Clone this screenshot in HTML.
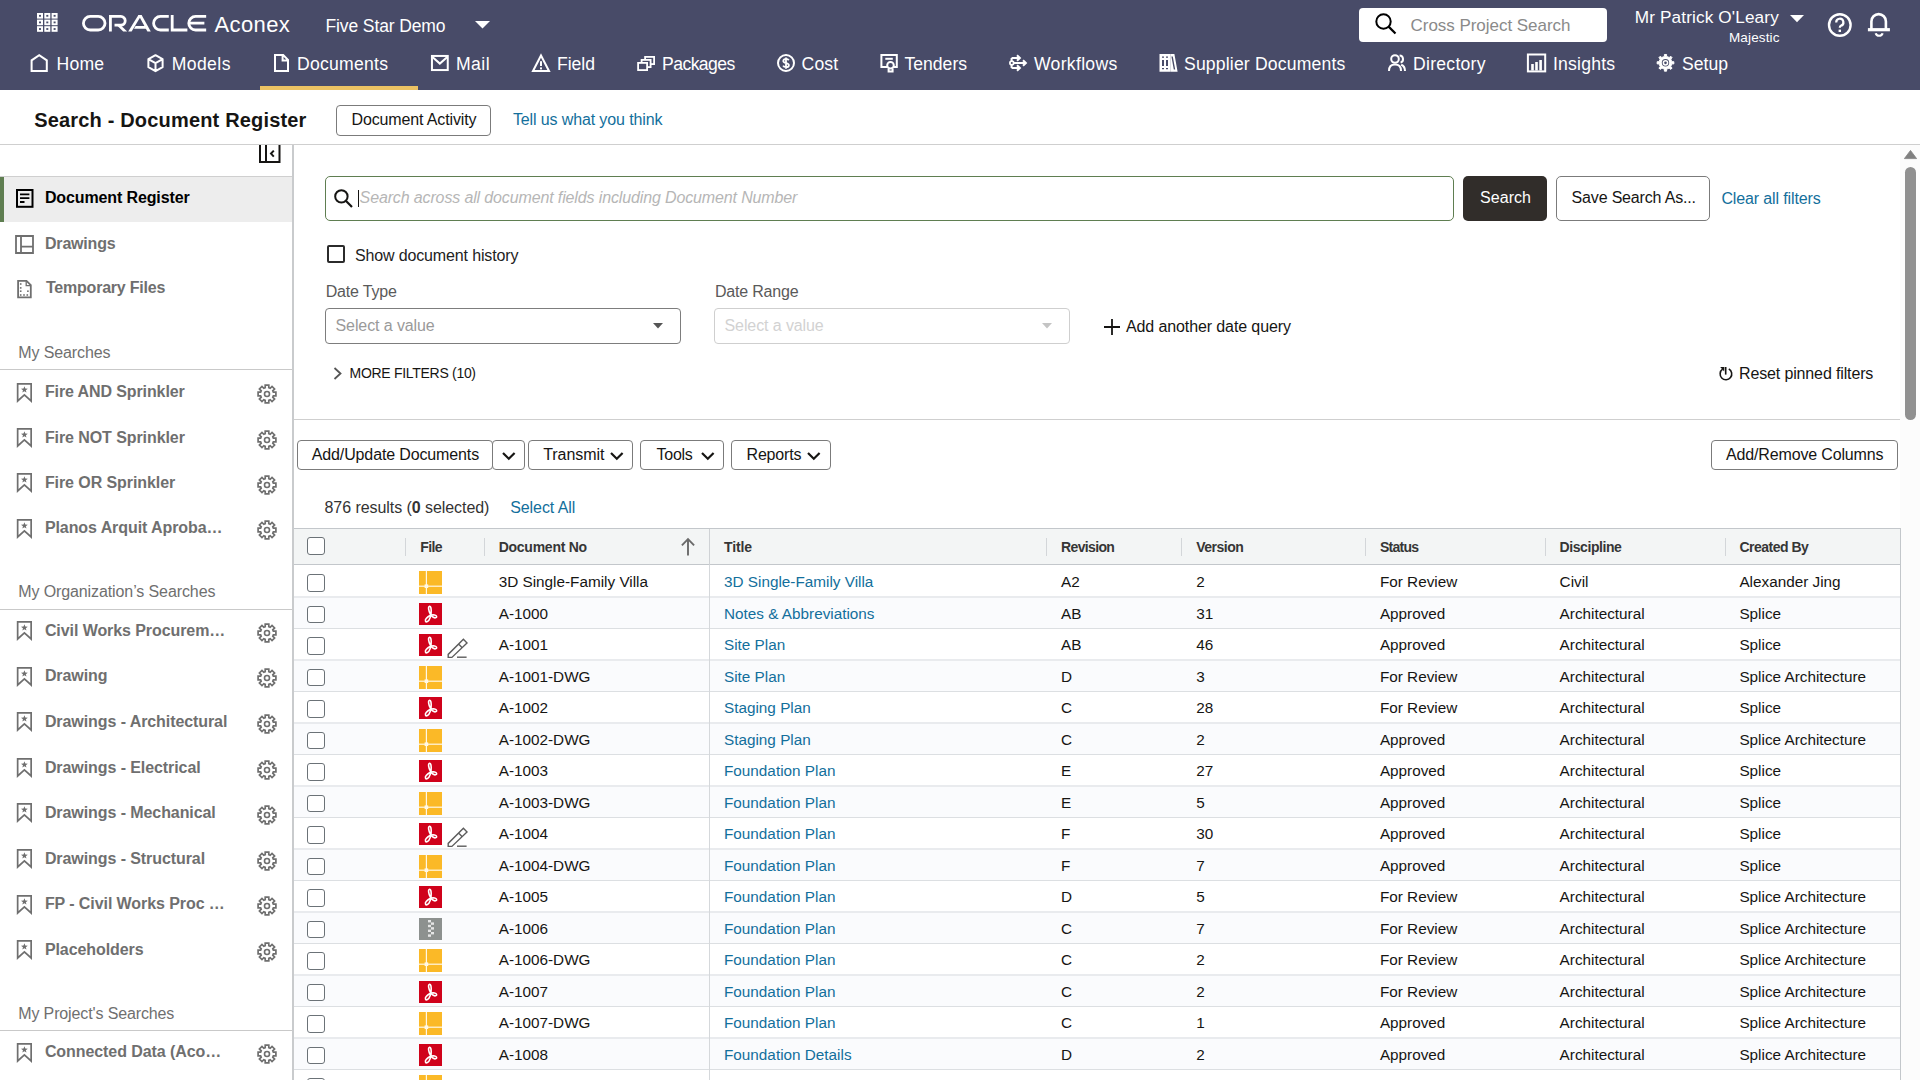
<!DOCTYPE html><html><head><meta charset="utf-8"><style>
html,body{margin:0;padding:0;width:1920px;height:1080px;overflow:hidden;background:#fff;}
body{position:relative;font-family:"Liberation Sans",sans-serif;}
.t{position:absolute;white-space:nowrap;line-height:1;}
svg{overflow:visible}
</style></head><body>
<div style="position:absolute;left:0.00px;top:0.00px;width:1920.00px;height:90.00px;background:#484b68"></div>
<svg style="position:absolute;left:37px;top:13px" width="21" height="19" viewBox="0 0 21 19"><rect x="0" y="0" width="6" height="5.6" fill="#fff"/><rect x="2" y="1.9" width="2" height="1.8" fill="#484b68"/><rect x="0" y="6.6" width="6" height="5.6" fill="#fff"/><rect x="2" y="8.5" width="2" height="1.8" fill="#484b68"/><rect x="0" y="13.2" width="6" height="5.6" fill="#fff"/><rect x="2" y="15.1" width="2" height="1.8" fill="#484b68"/><rect x="7.3" y="0" width="6" height="5.6" fill="#fff"/><rect x="9.3" y="1.9" width="2" height="1.8" fill="#484b68"/><rect x="7.3" y="6.6" width="6" height="5.6" fill="#fff"/><rect x="9.3" y="8.5" width="2" height="1.8" fill="#484b68"/><rect x="7.3" y="13.2" width="6" height="5.6" fill="#fff"/><rect x="9.3" y="15.1" width="2" height="1.8" fill="#484b68"/><rect x="14.6" y="0" width="6" height="5.6" fill="#fff"/><rect x="16.6" y="1.9" width="2" height="1.8" fill="#484b68"/><rect x="14.6" y="6.6" width="6" height="5.6" fill="#fff"/><rect x="16.6" y="8.5" width="2" height="1.8" fill="#484b68"/><rect x="14.6" y="13.2" width="6" height="5.6" fill="#fff"/><rect x="16.6" y="15.1" width="2" height="1.8" fill="#484b68"/></svg>
<svg style="position:absolute;left:82px;top:15.2px" width="125" height="16.4" viewBox="0 0 125 16.4"><g fill="none" stroke="#fff" stroke-width="2.8">
<rect x="1.4" y="1.4" width="21.6" height="13.6" rx="6.8"/>
<path d="M28.4 16.4V1.4H38.8A4.4 4.4 0 0 1 38.8 10.2H32.5"/>
<path d="M70 1.4H61.5" stroke="none"/>
<path d="M86.8 1.4H78.4A6.8 6.8 0 0 0 78.4 15H86.8"/>
<path d="M90.2 0V15H105.4"/>
<path d="M124.2 1.4H113.6A6.8 6.8 0 0 0 113.6 15H124.2M107.6 8.2H122.4"/>
</g>
<g fill="#fff">
<polygon points="33.5,9 37.4,9 45.2,16.4 41.2,16.4"/>
<polygon points="46.2,16.4 56.4,0 59.6,0 49.6,16.4"/>
<polygon points="56.4,0 59.6,0 68.8,16.4 65.4,16.4"/>
<polygon points="53.6,10.9 63,10.9 64.6,13.7 52,13.7"/>
</g></svg>
<div class="t" style="left:214.50px;top:14.00px;font-size:22.00px;color:#ffffff;letter-spacing:0.388px;">Aconex</div>
<div class="t" style="left:325.50px;top:18.00px;font-size:17.50px;color:#ffffff;letter-spacing:-0.116px;">Five Star Demo</div>
<svg style="position:absolute;left:474.5px;top:20.8px" width="15" height="8" viewBox="0 0 15 8"><polygon points="0,0 15,0 7.5,7.5" fill="#fff"/></svg>
<div style="position:absolute;left:1359.00px;top:8.00px;width:248.00px;height:34.00px;background:#fff;border-radius:4px"></div>
<svg style="position:absolute;left:1375px;top:13px" width="22" height="21" viewBox="0 0 22 21"><circle cx="8.5" cy="8.5" r="7.2" fill="none" stroke="#000" stroke-width="2"/><line x1="13.6" y1="13.6" x2="20.5" y2="20.5" stroke="#000" stroke-width="2.2"/></svg>
<div class="t" style="left:1410.50px;top:17.00px;font-size:17.00px;color:#8a8a8a;letter-spacing:-0.031px;">Cross Project Search</div>
<div class="t" style="left:1634.80px;top:9.00px;font-size:17.20px;color:#ffffff;letter-spacing:0.127px;">Mr Patrick O&#x27;Leary</div>
<div class="t" style="left:1729.00px;top:31.00px;font-size:13.50px;color:#ffffff;letter-spacing:0.128px;">Majestic</div>
<svg style="position:absolute;left:1790px;top:14.8px" width="14" height="7.2" viewBox="0 0 14 7.2"><polygon points="0,0 14,0 7,7.2" fill="#fff"/></svg>
<svg style="position:absolute;left:1827px;top:13px" width="26" height="24" viewBox="0 0 26 24"><circle cx="12.8" cy="12" r="10.8" fill="none" stroke="#fff" stroke-width="2.4"/><path d="M9.2 9.4A3.6 3.6 0 1 1 13.8 12.8C12.9 13.3 12.8 13.8 12.8 14.8" fill="none" stroke="#fff" stroke-width="2.2"/><rect x="11.6" y="16.6" width="2.4" height="2.4" fill="#fff"/></svg>
<svg style="position:absolute;left:1867px;top:13px" width="24" height="26" viewBox="0 0 24 26"><path d="M4.4 16V8.4A7.25 7.25 0 0 1 18.9 8.4V16" fill="none" stroke="#fff" stroke-width="2.6"/><rect x="0.9" y="15.1" width="22" height="3.2" fill="#fff"/><path d="M8.7 20.2A3.6 3.6 0 0 0 15.6 20.2" fill="none" stroke="#fff" stroke-width="2.2"/></svg>
<div class="t" style="left:56.50px;top:56.00px;font-size:17.60px;color:#ffffff;letter-spacing:0.202px;">Home</div>
<div class="t" style="left:171.70px;top:56.00px;font-size:17.60px;color:#ffffff;letter-spacing:0.404px;">Models</div>
<div class="t" style="left:297.00px;top:56.00px;font-size:17.60px;color:#ffffff;letter-spacing:0.255px;">Documents</div>
<div class="t" style="left:456.00px;top:56.00px;font-size:17.60px;color:#ffffff;letter-spacing:0.462px;">Mail</div>
<div class="t" style="left:557.00px;top:56.00px;font-size:17.60px;color:#ffffff;letter-spacing:-0.023px;">Field</div>
<div class="t" style="left:662.00px;top:56.00px;font-size:17.60px;color:#ffffff;letter-spacing:-0.563px;">Packages</div>
<div class="t" style="left:801.60px;top:56.00px;font-size:17.60px;color:#ffffff;letter-spacing:0.089px;">Cost</div>
<div class="t" style="left:904.50px;top:56.00px;font-size:17.60px;color:#ffffff;letter-spacing:-0.010px;">Tenders</div>
<div class="t" style="left:1034.00px;top:56.00px;font-size:17.60px;color:#ffffff;letter-spacing:0.302px;">Workflows</div>
<div class="t" style="left:1184.00px;top:56.00px;font-size:17.60px;color:#ffffff;letter-spacing:0.169px;">Supplier Documents</div>
<div class="t" style="left:1413.00px;top:56.00px;font-size:17.60px;color:#ffffff;letter-spacing:0.268px;">Directory</div>
<div class="t" style="left:1553.00px;top:56.00px;font-size:17.60px;color:#ffffff;letter-spacing:0.200px;">Insights</div>
<div class="t" style="left:1682.00px;top:56.00px;font-size:17.60px;color:#ffffff;letter-spacing:0.015px;">Setup</div>
<div style="position:absolute;left:260.00px;top:86.00px;width:158.00px;height:4.00px;background:#ecc263"></div>
<svg style="position:absolute;left:30px;top:54px" width="19" height="18" viewBox="0 0 19 18"><path d="M1.6 17V6.4L9.2 1.2L16.8 6.4V17Z" fill="none" stroke="#fff" stroke-width="2" stroke-linejoin="miter"/></svg>
<svg style="position:absolute;left:147px;top:54px" width="17" height="18" viewBox="0 0 17 18"><path d="M8.5 1.2L15.6 5.2V13.2L8.5 17.2L1.4 13.2V5.2Z M1.4 5.2L8.5 9.2L15.6 5.2 M8.5 9.2V17.2" fill="none" stroke="#fff" stroke-width="2" stroke-linejoin="round"/></svg>
<svg style="position:absolute;left:274px;top:54px" width="15" height="18" viewBox="0 0 15 18"><path d="M1 1H9.2L14 5.8V17H1Z M8.6 1.2V6.4H13.8" fill="none" stroke="#fff" stroke-width="2"/></svg>
<svg style="position:absolute;left:430.5px;top:55px" width="18" height="17" viewBox="0 0 18 17"><rect x="0.95" y="0.95" width="15.8" height="14.1" fill="none" stroke="#fff" stroke-width="2"/><path d="M1.4 1.9L8.85 8.6L16.3 1.9" fill="none" stroke="#fff" stroke-width="2"/></svg>
<svg style="position:absolute;left:532px;top:54px" width="18" height="18" viewBox="0 0 18 18"><path d="M9 1.5L17 17H1Z" fill="none" stroke="#fff" stroke-width="2" stroke-linejoin="miter"/><rect x="8" y="7.2" width="2" height="4.8" fill="#fff"/><rect x="8" y="13.4" width="2" height="2" fill="#fff"/></svg>
<svg style="position:absolute;left:632px;top:50px" width="28" height="26" viewBox="0 0 28 26"><g fill="#484b68" stroke="#fff" stroke-width="1.8"><rect x="13.1" y="6.9" width="9" height="7.2"/><rect x="9.6" y="9.9" width="9" height="7.2"/><rect x="6.1" y="12.9" width="9" height="7.2"/></g></svg>
<svg style="position:absolute;left:777px;top:54px" width="18" height="18" viewBox="0 0 18 18"><circle cx="9" cy="9" r="8" fill="none" stroke="#fff" stroke-width="2"/><path d="M11.8 6.2C11.2 5.2 10.2 4.9 9 4.9C7.4 4.9 6.3 5.7 6.3 7C6.3 9.9 11.9 8.3 11.9 11.2C11.9 12.5 10.6 13.2 9 13.2C7.6 13.2 6.6 12.6 6.1 11.6M9 3.4V14.8" fill="none" stroke="#fff" stroke-width="1.8"/></svg>
<svg style="position:absolute;left:874px;top:50px" width="28" height="26" viewBox="0 0 28 26"><path d="M13.4 17H7.4V5H22.8V17H19.6" fill="none" stroke="#fff" stroke-width="2"/><path d="M11.3 8.8H18.8" fill="none" stroke="#fff" stroke-width="2"/><circle cx="16.5" cy="15.3" r="3.3" fill="none" stroke="#fff" stroke-width="2"/><path d="M14.6 18.4V21.6H18.6V18.4" fill="none" stroke="#fff" stroke-width="2"/></svg>
<svg style="position:absolute;left:1004px;top:50px" width="28" height="26" viewBox="0 0 28 26"><path d="M7.6 8V18M7.6 8H15.6M7.6 18H15.6M9.6 13H21.6" fill="none" stroke="#fff" stroke-width="2"/><path d="M13 5.2L15.9 8L13 10.8M13 15.2L15.9 18L13 20.8M19 10.2L21.9 13L19 15.8" fill="none" stroke="#fff" stroke-width="2"/><circle cx="7.8" cy="13" r="1.9" fill="#484b68" stroke="#fff" stroke-width="1.7"/></svg>
<svg style="position:absolute;left:1154px;top:50px" width="28" height="26" viewBox="0 0 28 26"><path d="M5.5 4.1H16V21.7H5.5Z M8 6.5V7.8H10V6.5Z M12 6.5V7.8H14V6.5Z M8 10V16H10V10Z M12 10V16H14V10Z M8 18V19.3H10V18Z M12 18V19.3H14V18Z" fill="#fff" fill-rule="evenodd"/><path d="M16.2 4.1H20.4L23.6 21.7H16.2Z M17.4 6.6L18.8 6.6L21.2 19.6L19.8 19.6Z" fill="#fff" fill-rule="evenodd"/></svg>
<svg style="position:absolute;left:1388px;top:54px" width="18" height="18" viewBox="0 0 18 18"><circle cx="7" cy="5" r="3.8" fill="none" stroke="#fff" stroke-width="2"/><path d="M1 17C1 12.6 3.6 10.6 7 10.6C10.4 10.6 13 12.6 13 17" fill="none" stroke="#fff" stroke-width="2"/><path d="M11.6 1.6A3.6 3.6 0 0 1 12.6 8.6M13.2 10.8C15.4 11.6 17 13.6 17 17" fill="none" stroke="#fff" stroke-width="2"/></svg>
<svg style="position:absolute;left:1522px;top:50px" width="28" height="26" viewBox="0 0 28 26"><rect x="5.9" y="4.5" width="17.3" height="16.9" fill="none" stroke="#fff" stroke-width="2"/><path d="M10.5 20.5V14M14.5 20.5V12M18.6 20.5V10" stroke="#fff" stroke-width="2.6"/></svg>
<svg style="position:absolute;left:1652px;top:50px" width="28" height="26" viewBox="0 0 28 26"><path d="M19.54 10.69 L19.81 11.75 L21.83 11.69 L21.83 13.91 L19.81 13.85 L19.26 15.58 L18.71 16.52 L20.17 17.91 L18.61 19.47 L17.22 18.01 L15.61 18.84 L14.55 19.11 L14.61 21.13 L12.39 21.13 L12.45 19.11 L10.72 18.56 L9.78 18.01 L8.39 19.47 L6.83 17.91 L8.29 16.52 L7.46 14.91 L7.19 13.85 L5.17 13.91 L5.17 11.69 L7.19 11.75 L7.74 10.02 L8.29 9.08 L6.83 7.69 L8.39 6.13 L9.78 7.59 L11.39 6.76 L12.45 6.49 L12.39 4.47 L14.61 4.47 L14.55 6.49 L16.28 7.04 L17.22 7.59 L18.61 6.13 L20.17 7.69 L18.71 9.08Z" fill="#fff" stroke="#fff" stroke-width="1" stroke-linejoin="round"/><circle cx="13.5" cy="12.8" r="3.7" fill="#484b68"/><circle cx="13.5" cy="12.8" r="2.1" fill="none" stroke="#fff" stroke-width="1.5"/></svg>
<div class="t" style="left:34.20px;top:110.00px;font-size:20.00px;color:#161513;font-weight:700;letter-spacing:0.174px;">Search - Document Register</div>
<div style="position:absolute;left:336.20px;top:105.20px;width:152.80px;height:28.80px;border:1px solid #7b7b7b;border-radius:4px;background:#fff"></div>
<div class="t" style="left:351.50px;top:112.00px;font-size:16.00px;color:#161513;letter-spacing:-0.137px;">Document Activity</div>
<div class="t" style="left:512.90px;top:112.00px;font-size:16.00px;color:#136f9c;letter-spacing:-0.120px;">Tell us what you think</div>
<div style="position:absolute;left:0.00px;top:144.00px;width:1920.00px;height:1.00px;background:#cfcfcf"></div>
<div style="position:absolute;left:292.00px;top:145.00px;width:2.00px;height:935.00px;background:#c9cbcd"></div>
<svg style="position:absolute;left:259px;top:145px" width="22" height="18" viewBox="0 0 22 18"><path d="M1 0V17H20.5V0M7 0V17" fill="none" stroke="#161513" stroke-width="2"/><path d="M14.8 5.6L12 8.6L14.8 11.6" fill="none" stroke="#161513" stroke-width="2"/></svg>
<div style="position:absolute;left:0.00px;top:176.00px;width:292.00px;height:1.00px;background:#cfcfcf"></div>
<div style="position:absolute;left:0.00px;top:177.00px;width:292.00px;height:45.00px;background:#ededed"></div>
<div style="position:absolute;left:0.00px;top:177.00px;width:4.00px;height:45.00px;background:#5f7e51"></div>
<svg style="position:absolute;left:16px;top:189px" width="18" height="19" viewBox="0 0 18 19"><rect x="1" y="1" width="15.5" height="16.8" fill="none" stroke="#000" stroke-width="2"/><path d="M4 5.4H13.4M4 9.1H13.4M4 13H8.5" stroke="#000" stroke-width="1.9"/></svg>
<div class="t" style="left:44.90px;top:190.00px;font-size:16.00px;color:#000;font-weight:700;letter-spacing:-0.121px;">Document Register</div>
<svg style="position:absolute;left:15px;top:235px" width="19" height="19" viewBox="0 0 19 19"><path d="M1 1H18V18H1Z M6 1V18 M6 11.6H18" fill="none" stroke="#6f6f6f" stroke-width="1.8"/></svg>
<div class="t" style="left:45.00px;top:236.00px;font-size:16.00px;color:#6f6f6f;font-weight:700;letter-spacing:-0.194px;">Drawings</div>
<svg style="position:absolute;left:17px;top:280px" width="16" height="19" viewBox="0 0 16 19"><path d="M1.1 0.9H9.5L13.8 5.2V17.4H1.1Z" fill="none" stroke="#6f6f6f" stroke-width="1.8"/><path d="M9.2 1.2V5.6H13.6" fill="none" stroke="#6f6f6f" stroke-width="1.3"/><g fill="#6f6f6f"><rect x="2.9" y="3.2" width="1.6" height="1.6"/><rect x="2.9" y="7.1" width="1.6" height="1.6"/><rect x="2.9" y="10.4" width="1.6" height="1.6"/><rect x="2.9" y="14.2" width="1.6" height="1.6"/><rect x="6.2" y="14.2" width="1.6" height="1.6"/><rect x="9.5" y="14.2" width="1.6" height="1.6"/><rect x="10.1" y="10.4" width="1.6" height="1.6"/></g></svg>
<div class="t" style="left:46.00px;top:280.00px;font-size:16.00px;color:#6f6f6f;font-weight:700;letter-spacing:-0.218px;">Temporary Files</div>
<div class="t" style="left:18.20px;top:345.00px;font-size:16.00px;color:#6f6f6f;letter-spacing:-0.101px;">My Searches</div>
<div style="position:absolute;left:0.00px;top:369.00px;width:292.00px;height:1.00px;background:#c9c9c9"></div>
<svg style="position:absolute;left:16px;top:381.6px" width="18" height="21" viewBox="0 0 18 21"><path d="M1.65 1.85H15.15V19L8.4 12.9L1.65 19Z" fill="none" stroke="#6f6f6f" stroke-width="1.7" stroke-linejoin="miter"/><path d="M8.4 4.2L9.3 6.6L11.8 6.7L9.8 8.2L10.5 10.6L8.4 9.2L6.3 10.6L7 8.2L5 6.7L7.5 6.6Z" fill="#6f6f6f"/></svg>
<div class="t" style="left:44.90px;top:384.00px;font-size:16.00px;color:#6f6f6f;font-weight:700;letter-spacing:-0.106px;">Fire AND Sprinkler</div>
<svg style="position:absolute;left:256.9px;top:384.4px" width="20" height="20" viewBox="0 0 20 20"><path d="M16.35 8.20 L18.90 8.20 L18.90 11.80 L16.35 11.80 L15.76 13.22 L17.57 15.02 L15.02 17.57 L13.22 15.76 L11.80 16.35 L11.80 18.90 L8.20 18.90 L8.20 16.35 L6.78 15.76 L4.98 17.57 L2.43 15.02 L4.24 13.22 L3.65 11.80 L1.10 11.80 L1.10 8.20 L3.65 8.20 L4.24 6.78 L2.43 4.98 L4.98 2.43 L6.78 4.24 L8.20 3.65 L8.20 1.10 L11.80 1.10 L11.80 3.65 L13.22 4.24 L15.02 2.43 L17.57 4.98 L15.76 6.78Z" fill="none" stroke="#6f6f6f" stroke-width="1.7" stroke-linejoin="miter"/><circle cx="10" cy="10" r="2.5" fill="none" stroke="#6f6f6f" stroke-width="1.6"/></svg>
<svg style="position:absolute;left:16px;top:426.95px" width="18" height="21" viewBox="0 0 18 21"><path d="M1.65 1.85H15.15V19L8.4 12.9L1.65 19Z" fill="none" stroke="#6f6f6f" stroke-width="1.7" stroke-linejoin="miter"/><path d="M8.4 4.2L9.3 6.6L11.8 6.7L9.8 8.2L10.5 10.6L8.4 9.2L6.3 10.6L7 8.2L5 6.7L7.5 6.6Z" fill="#6f6f6f"/></svg>
<div class="t" style="left:44.90px;top:430.00px;font-size:16.00px;color:#6f6f6f;font-weight:700;letter-spacing:-0.08px;">Fire NOT Sprinkler</div>
<svg style="position:absolute;left:256.9px;top:429.75px" width="20" height="20" viewBox="0 0 20 20"><path d="M16.35 8.20 L18.90 8.20 L18.90 11.80 L16.35 11.80 L15.76 13.22 L17.57 15.02 L15.02 17.57 L13.22 15.76 L11.80 16.35 L11.80 18.90 L8.20 18.90 L8.20 16.35 L6.78 15.76 L4.98 17.57 L2.43 15.02 L4.24 13.22 L3.65 11.80 L1.10 11.80 L1.10 8.20 L3.65 8.20 L4.24 6.78 L2.43 4.98 L4.98 2.43 L6.78 4.24 L8.20 3.65 L8.20 1.10 L11.80 1.10 L11.80 3.65 L13.22 4.24 L15.02 2.43 L17.57 4.98 L15.76 6.78Z" fill="none" stroke="#6f6f6f" stroke-width="1.7" stroke-linejoin="miter"/><circle cx="10" cy="10" r="2.5" fill="none" stroke="#6f6f6f" stroke-width="1.6"/></svg>
<svg style="position:absolute;left:16px;top:472.3px" width="18" height="21" viewBox="0 0 18 21"><path d="M1.65 1.85H15.15V19L8.4 12.9L1.65 19Z" fill="none" stroke="#6f6f6f" stroke-width="1.7" stroke-linejoin="miter"/><path d="M8.4 4.2L9.3 6.6L11.8 6.7L9.8 8.2L10.5 10.6L8.4 9.2L6.3 10.6L7 8.2L5 6.7L7.5 6.6Z" fill="#6f6f6f"/></svg>
<div class="t" style="left:44.90px;top:475.00px;font-size:16.00px;color:#6f6f6f;font-weight:700;letter-spacing:-0.08px;">Fire OR Sprinkler</div>
<svg style="position:absolute;left:256.9px;top:475.1px" width="20" height="20" viewBox="0 0 20 20"><path d="M16.35 8.20 L18.90 8.20 L18.90 11.80 L16.35 11.80 L15.76 13.22 L17.57 15.02 L15.02 17.57 L13.22 15.76 L11.80 16.35 L11.80 18.90 L8.20 18.90 L8.20 16.35 L6.78 15.76 L4.98 17.57 L2.43 15.02 L4.24 13.22 L3.65 11.80 L1.10 11.80 L1.10 8.20 L3.65 8.20 L4.24 6.78 L2.43 4.98 L4.98 2.43 L6.78 4.24 L8.20 3.65 L8.20 1.10 L11.80 1.10 L11.80 3.65 L13.22 4.24 L15.02 2.43 L17.57 4.98 L15.76 6.78Z" fill="none" stroke="#6f6f6f" stroke-width="1.7" stroke-linejoin="miter"/><circle cx="10" cy="10" r="2.5" fill="none" stroke="#6f6f6f" stroke-width="1.6"/></svg>
<svg style="position:absolute;left:16px;top:517.65px" width="18" height="21" viewBox="0 0 18 21"><path d="M1.65 1.85H15.15V19L8.4 12.9L1.65 19Z" fill="none" stroke="#6f6f6f" stroke-width="1.7" stroke-linejoin="miter"/><path d="M8.4 4.2L9.3 6.6L11.8 6.7L9.8 8.2L10.5 10.6L8.4 9.2L6.3 10.6L7 8.2L5 6.7L7.5 6.6Z" fill="#6f6f6f"/></svg>
<div class="t" style="left:44.90px;top:520.00px;font-size:16.00px;color:#6f6f6f;font-weight:700;letter-spacing:-0.08px;">Planos Arquit Aproba…</div>
<svg style="position:absolute;left:256.9px;top:520.45px" width="20" height="20" viewBox="0 0 20 20"><path d="M16.35 8.20 L18.90 8.20 L18.90 11.80 L16.35 11.80 L15.76 13.22 L17.57 15.02 L15.02 17.57 L13.22 15.76 L11.80 16.35 L11.80 18.90 L8.20 18.90 L8.20 16.35 L6.78 15.76 L4.98 17.57 L2.43 15.02 L4.24 13.22 L3.65 11.80 L1.10 11.80 L1.10 8.20 L3.65 8.20 L4.24 6.78 L2.43 4.98 L4.98 2.43 L6.78 4.24 L8.20 3.65 L8.20 1.10 L11.80 1.10 L11.80 3.65 L13.22 4.24 L15.02 2.43 L17.57 4.98 L15.76 6.78Z" fill="none" stroke="#6f6f6f" stroke-width="1.7" stroke-linejoin="miter"/><circle cx="10" cy="10" r="2.5" fill="none" stroke="#6f6f6f" stroke-width="1.6"/></svg>
<div class="t" style="left:18.20px;top:584.00px;font-size:16.00px;color:#6f6f6f;letter-spacing:-0.102px;">My Organization’s Searches</div>
<div style="position:absolute;left:0.00px;top:609.00px;width:292.00px;height:1.00px;background:#c9c9c9"></div>
<svg style="position:absolute;left:16px;top:620.1px" width="18" height="21" viewBox="0 0 18 21"><path d="M1.65 1.85H15.15V19L8.4 12.9L1.65 19Z" fill="none" stroke="#6f6f6f" stroke-width="1.7" stroke-linejoin="miter"/><path d="M8.4 4.2L9.3 6.6L11.8 6.7L9.8 8.2L10.5 10.6L8.4 9.2L6.3 10.6L7 8.2L5 6.7L7.5 6.6Z" fill="#6f6f6f"/></svg>
<div class="t" style="left:44.90px;top:623.00px;font-size:16.00px;color:#6f6f6f;font-weight:700;letter-spacing:-0.08px;">Civil Works Procurem…</div>
<svg style="position:absolute;left:256.9px;top:622.9px" width="20" height="20" viewBox="0 0 20 20"><path d="M16.35 8.20 L18.90 8.20 L18.90 11.80 L16.35 11.80 L15.76 13.22 L17.57 15.02 L15.02 17.57 L13.22 15.76 L11.80 16.35 L11.80 18.90 L8.20 18.90 L8.20 16.35 L6.78 15.76 L4.98 17.57 L2.43 15.02 L4.24 13.22 L3.65 11.80 L1.10 11.80 L1.10 8.20 L3.65 8.20 L4.24 6.78 L2.43 4.98 L4.98 2.43 L6.78 4.24 L8.20 3.65 L8.20 1.10 L11.80 1.10 L11.80 3.65 L13.22 4.24 L15.02 2.43 L17.57 4.98 L15.76 6.78Z" fill="none" stroke="#6f6f6f" stroke-width="1.7" stroke-linejoin="miter"/><circle cx="10" cy="10" r="2.5" fill="none" stroke="#6f6f6f" stroke-width="1.6"/></svg>
<svg style="position:absolute;left:16px;top:665.67px" width="18" height="21" viewBox="0 0 18 21"><path d="M1.65 1.85H15.15V19L8.4 12.9L1.65 19Z" fill="none" stroke="#6f6f6f" stroke-width="1.7" stroke-linejoin="miter"/><path d="M8.4 4.2L9.3 6.6L11.8 6.7L9.8 8.2L10.5 10.6L8.4 9.2L6.3 10.6L7 8.2L5 6.7L7.5 6.6Z" fill="#6f6f6f"/></svg>
<div class="t" style="left:44.90px;top:668.00px;font-size:16.00px;color:#6f6f6f;font-weight:700;letter-spacing:-0.08px;">Drawing</div>
<svg style="position:absolute;left:256.9px;top:668.47px" width="20" height="20" viewBox="0 0 20 20"><path d="M16.35 8.20 L18.90 8.20 L18.90 11.80 L16.35 11.80 L15.76 13.22 L17.57 15.02 L15.02 17.57 L13.22 15.76 L11.80 16.35 L11.80 18.90 L8.20 18.90 L8.20 16.35 L6.78 15.76 L4.98 17.57 L2.43 15.02 L4.24 13.22 L3.65 11.80 L1.10 11.80 L1.10 8.20 L3.65 8.20 L4.24 6.78 L2.43 4.98 L4.98 2.43 L6.78 4.24 L8.20 3.65 L8.20 1.10 L11.80 1.10 L11.80 3.65 L13.22 4.24 L15.02 2.43 L17.57 4.98 L15.76 6.78Z" fill="none" stroke="#6f6f6f" stroke-width="1.7" stroke-linejoin="miter"/><circle cx="10" cy="10" r="2.5" fill="none" stroke="#6f6f6f" stroke-width="1.6"/></svg>
<svg style="position:absolute;left:16px;top:711.24px" width="18" height="21" viewBox="0 0 18 21"><path d="M1.65 1.85H15.15V19L8.4 12.9L1.65 19Z" fill="none" stroke="#6f6f6f" stroke-width="1.7" stroke-linejoin="miter"/><path d="M8.4 4.2L9.3 6.6L11.8 6.7L9.8 8.2L10.5 10.6L8.4 9.2L6.3 10.6L7 8.2L5 6.7L7.5 6.6Z" fill="#6f6f6f"/></svg>
<div class="t" style="left:44.90px;top:714.00px;font-size:16.00px;color:#6f6f6f;font-weight:700;letter-spacing:-0.08px;">Drawings - Architectural</div>
<svg style="position:absolute;left:256.9px;top:714.04px" width="20" height="20" viewBox="0 0 20 20"><path d="M16.35 8.20 L18.90 8.20 L18.90 11.80 L16.35 11.80 L15.76 13.22 L17.57 15.02 L15.02 17.57 L13.22 15.76 L11.80 16.35 L11.80 18.90 L8.20 18.90 L8.20 16.35 L6.78 15.76 L4.98 17.57 L2.43 15.02 L4.24 13.22 L3.65 11.80 L1.10 11.80 L1.10 8.20 L3.65 8.20 L4.24 6.78 L2.43 4.98 L4.98 2.43 L6.78 4.24 L8.20 3.65 L8.20 1.10 L11.80 1.10 L11.80 3.65 L13.22 4.24 L15.02 2.43 L17.57 4.98 L15.76 6.78Z" fill="none" stroke="#6f6f6f" stroke-width="1.7" stroke-linejoin="miter"/><circle cx="10" cy="10" r="2.5" fill="none" stroke="#6f6f6f" stroke-width="1.6"/></svg>
<svg style="position:absolute;left:16px;top:756.81px" width="18" height="21" viewBox="0 0 18 21"><path d="M1.65 1.85H15.15V19L8.4 12.9L1.65 19Z" fill="none" stroke="#6f6f6f" stroke-width="1.7" stroke-linejoin="miter"/><path d="M8.4 4.2L9.3 6.6L11.8 6.7L9.8 8.2L10.5 10.6L8.4 9.2L6.3 10.6L7 8.2L5 6.7L7.5 6.6Z" fill="#6f6f6f"/></svg>
<div class="t" style="left:44.90px;top:760.00px;font-size:16.00px;color:#6f6f6f;font-weight:700;letter-spacing:-0.08px;">Drawings - Electrical</div>
<svg style="position:absolute;left:256.9px;top:759.61px" width="20" height="20" viewBox="0 0 20 20"><path d="M16.35 8.20 L18.90 8.20 L18.90 11.80 L16.35 11.80 L15.76 13.22 L17.57 15.02 L15.02 17.57 L13.22 15.76 L11.80 16.35 L11.80 18.90 L8.20 18.90 L8.20 16.35 L6.78 15.76 L4.98 17.57 L2.43 15.02 L4.24 13.22 L3.65 11.80 L1.10 11.80 L1.10 8.20 L3.65 8.20 L4.24 6.78 L2.43 4.98 L4.98 2.43 L6.78 4.24 L8.20 3.65 L8.20 1.10 L11.80 1.10 L11.80 3.65 L13.22 4.24 L15.02 2.43 L17.57 4.98 L15.76 6.78Z" fill="none" stroke="#6f6f6f" stroke-width="1.7" stroke-linejoin="miter"/><circle cx="10" cy="10" r="2.5" fill="none" stroke="#6f6f6f" stroke-width="1.6"/></svg>
<svg style="position:absolute;left:16px;top:802.38px" width="18" height="21" viewBox="0 0 18 21"><path d="M1.65 1.85H15.15V19L8.4 12.9L1.65 19Z" fill="none" stroke="#6f6f6f" stroke-width="1.7" stroke-linejoin="miter"/><path d="M8.4 4.2L9.3 6.6L11.8 6.7L9.8 8.2L10.5 10.6L8.4 9.2L6.3 10.6L7 8.2L5 6.7L7.5 6.6Z" fill="#6f6f6f"/></svg>
<div class="t" style="left:44.90px;top:805.00px;font-size:16.00px;color:#6f6f6f;font-weight:700;letter-spacing:-0.08px;">Drawings - Mechanical</div>
<svg style="position:absolute;left:256.9px;top:805.18px" width="20" height="20" viewBox="0 0 20 20"><path d="M16.35 8.20 L18.90 8.20 L18.90 11.80 L16.35 11.80 L15.76 13.22 L17.57 15.02 L15.02 17.57 L13.22 15.76 L11.80 16.35 L11.80 18.90 L8.20 18.90 L8.20 16.35 L6.78 15.76 L4.98 17.57 L2.43 15.02 L4.24 13.22 L3.65 11.80 L1.10 11.80 L1.10 8.20 L3.65 8.20 L4.24 6.78 L2.43 4.98 L4.98 2.43 L6.78 4.24 L8.20 3.65 L8.20 1.10 L11.80 1.10 L11.80 3.65 L13.22 4.24 L15.02 2.43 L17.57 4.98 L15.76 6.78Z" fill="none" stroke="#6f6f6f" stroke-width="1.7" stroke-linejoin="miter"/><circle cx="10" cy="10" r="2.5" fill="none" stroke="#6f6f6f" stroke-width="1.6"/></svg>
<svg style="position:absolute;left:16px;top:847.95px" width="18" height="21" viewBox="0 0 18 21"><path d="M1.65 1.85H15.15V19L8.4 12.9L1.65 19Z" fill="none" stroke="#6f6f6f" stroke-width="1.7" stroke-linejoin="miter"/><path d="M8.4 4.2L9.3 6.6L11.8 6.7L9.8 8.2L10.5 10.6L8.4 9.2L6.3 10.6L7 8.2L5 6.7L7.5 6.6Z" fill="#6f6f6f"/></svg>
<div class="t" style="left:44.90px;top:851.00px;font-size:16.00px;color:#6f6f6f;font-weight:700;letter-spacing:-0.08px;">Drawings - Structural</div>
<svg style="position:absolute;left:256.9px;top:850.75px" width="20" height="20" viewBox="0 0 20 20"><path d="M16.35 8.20 L18.90 8.20 L18.90 11.80 L16.35 11.80 L15.76 13.22 L17.57 15.02 L15.02 17.57 L13.22 15.76 L11.80 16.35 L11.80 18.90 L8.20 18.90 L8.20 16.35 L6.78 15.76 L4.98 17.57 L2.43 15.02 L4.24 13.22 L3.65 11.80 L1.10 11.80 L1.10 8.20 L3.65 8.20 L4.24 6.78 L2.43 4.98 L4.98 2.43 L6.78 4.24 L8.20 3.65 L8.20 1.10 L11.80 1.10 L11.80 3.65 L13.22 4.24 L15.02 2.43 L17.57 4.98 L15.76 6.78Z" fill="none" stroke="#6f6f6f" stroke-width="1.7" stroke-linejoin="miter"/><circle cx="10" cy="10" r="2.5" fill="none" stroke="#6f6f6f" stroke-width="1.6"/></svg>
<svg style="position:absolute;left:16px;top:893.52px" width="18" height="21" viewBox="0 0 18 21"><path d="M1.65 1.85H15.15V19L8.4 12.9L1.65 19Z" fill="none" stroke="#6f6f6f" stroke-width="1.7" stroke-linejoin="miter"/><path d="M8.4 4.2L9.3 6.6L11.8 6.7L9.8 8.2L10.5 10.6L8.4 9.2L6.3 10.6L7 8.2L5 6.7L7.5 6.6Z" fill="#6f6f6f"/></svg>
<div class="t" style="left:44.90px;top:896.00px;font-size:16.00px;color:#6f6f6f;font-weight:700;letter-spacing:-0.08px;">FP - Civil Works Proc …</div>
<svg style="position:absolute;left:256.9px;top:896.32px" width="20" height="20" viewBox="0 0 20 20"><path d="M16.35 8.20 L18.90 8.20 L18.90 11.80 L16.35 11.80 L15.76 13.22 L17.57 15.02 L15.02 17.57 L13.22 15.76 L11.80 16.35 L11.80 18.90 L8.20 18.90 L8.20 16.35 L6.78 15.76 L4.98 17.57 L2.43 15.02 L4.24 13.22 L3.65 11.80 L1.10 11.80 L1.10 8.20 L3.65 8.20 L4.24 6.78 L2.43 4.98 L4.98 2.43 L6.78 4.24 L8.20 3.65 L8.20 1.10 L11.80 1.10 L11.80 3.65 L13.22 4.24 L15.02 2.43 L17.57 4.98 L15.76 6.78Z" fill="none" stroke="#6f6f6f" stroke-width="1.7" stroke-linejoin="miter"/><circle cx="10" cy="10" r="2.5" fill="none" stroke="#6f6f6f" stroke-width="1.6"/></svg>
<svg style="position:absolute;left:16px;top:939.09px" width="18" height="21" viewBox="0 0 18 21"><path d="M1.65 1.85H15.15V19L8.4 12.9L1.65 19Z" fill="none" stroke="#6f6f6f" stroke-width="1.7" stroke-linejoin="miter"/><path d="M8.4 4.2L9.3 6.6L11.8 6.7L9.8 8.2L10.5 10.6L8.4 9.2L6.3 10.6L7 8.2L5 6.7L7.5 6.6Z" fill="#6f6f6f"/></svg>
<div class="t" style="left:44.90px;top:942.00px;font-size:16.00px;color:#6f6f6f;font-weight:700;letter-spacing:-0.08px;">Placeholders</div>
<svg style="position:absolute;left:256.9px;top:941.89px" width="20" height="20" viewBox="0 0 20 20"><path d="M16.35 8.20 L18.90 8.20 L18.90 11.80 L16.35 11.80 L15.76 13.22 L17.57 15.02 L15.02 17.57 L13.22 15.76 L11.80 16.35 L11.80 18.90 L8.20 18.90 L8.20 16.35 L6.78 15.76 L4.98 17.57 L2.43 15.02 L4.24 13.22 L3.65 11.80 L1.10 11.80 L1.10 8.20 L3.65 8.20 L4.24 6.78 L2.43 4.98 L4.98 2.43 L6.78 4.24 L8.20 3.65 L8.20 1.10 L11.80 1.10 L11.80 3.65 L13.22 4.24 L15.02 2.43 L17.57 4.98 L15.76 6.78Z" fill="none" stroke="#6f6f6f" stroke-width="1.7" stroke-linejoin="miter"/><circle cx="10" cy="10" r="2.5" fill="none" stroke="#6f6f6f" stroke-width="1.6"/></svg>
<div class="t" style="left:18.20px;top:1006.00px;font-size:16.00px;color:#6f6f6f;letter-spacing:-0.125px;">My Project&#x27;s Searches</div>
<div style="position:absolute;left:0.00px;top:1030.00px;width:292.00px;height:1.00px;background:#c9c9c9"></div>
<svg style="position:absolute;left:16px;top:1041.5px" width="18" height="21" viewBox="0 0 18 21"><path d="M1.65 1.85H15.15V19L8.4 12.9L1.65 19Z" fill="none" stroke="#6f6f6f" stroke-width="1.7" stroke-linejoin="miter"/><path d="M8.4 4.2L9.3 6.6L11.8 6.7L9.8 8.2L10.5 10.6L8.4 9.2L6.3 10.6L7 8.2L5 6.7L7.5 6.6Z" fill="#6f6f6f"/></svg>
<div class="t" style="left:44.90px;top:1044.00px;font-size:16.00px;color:#6f6f6f;font-weight:700;letter-spacing:-0.08px;">Connected Data (Aco…</div>
<svg style="position:absolute;left:256.9px;top:1044.3px" width="20" height="20" viewBox="0 0 20 20"><path d="M16.35 8.20 L18.90 8.20 L18.90 11.80 L16.35 11.80 L15.76 13.22 L17.57 15.02 L15.02 17.57 L13.22 15.76 L11.80 16.35 L11.80 18.90 L8.20 18.90 L8.20 16.35 L6.78 15.76 L4.98 17.57 L2.43 15.02 L4.24 13.22 L3.65 11.80 L1.10 11.80 L1.10 8.20 L3.65 8.20 L4.24 6.78 L2.43 4.98 L4.98 2.43 L6.78 4.24 L8.20 3.65 L8.20 1.10 L11.80 1.10 L11.80 3.65 L13.22 4.24 L15.02 2.43 L17.57 4.98 L15.76 6.78Z" fill="none" stroke="#6f6f6f" stroke-width="1.7" stroke-linejoin="miter"/><circle cx="10" cy="10" r="2.5" fill="none" stroke="#6f6f6f" stroke-width="1.6"/></svg>
<div style="position:absolute;left:1900.00px;top:145.00px;width:20.00px;height:935.00px;background:#fcfcfc"></div>
<svg style="position:absolute;left:1904px;top:150px" width="13" height="9" viewBox="0 0 13 9"><polygon points="6.5,0.4 12.6,8.6 0.4,8.6" fill="#808080" stroke="#808080" stroke-width="0.8" stroke-linejoin="round"/></svg>
<div style="position:absolute;left:1905.00px;top:167.00px;width:11.00px;height:253.00px;background:#909090;border-radius:6px"></div>
<div style="position:absolute;left:325.00px;top:176.00px;width:1127.00px;height:43.00px;border:1px solid #5f7e51;border-radius:5px;background:#fff"></div>
<svg style="position:absolute;left:334px;top:189px" width="19" height="19" viewBox="0 0 19 19"><circle cx="7.4" cy="7.4" r="6.2" fill="none" stroke="#161513" stroke-width="2"/><line x1="11.8" y1="11.8" x2="18" y2="18" stroke="#161513" stroke-width="2.2"/></svg>
<div style="position:absolute;left:358.00px;top:190.30px;width:1.20px;height:16.50px;background:#161513"></div>
<div class="t" style="left:359.60px;top:190.00px;font-size:16.00px;color:#b6b6b6;font-style:italic;letter-spacing:-0.134px;">Search across all document fields including Document Number</div>
<div style="position:absolute;left:1463.00px;top:176.00px;width:84.00px;height:45.00px;background:#312d2a;border-radius:5px"></div>
<div class="t" style="left:1480.00px;top:190.00px;font-size:16.00px;color:#fff;letter-spacing:0.053px;">Search</div>
<div style="position:absolute;left:1556.00px;top:176.00px;width:152.00px;height:43.00px;border:1px solid #7b7b7b;border-radius:5px;background:#fff"></div>
<div class="t" style="left:1571.60px;top:190.00px;font-size:16.00px;color:#161513;letter-spacing:-0.176px;">Save Search As...</div>
<div class="t" style="left:1721.40px;top:191.00px;font-size:16.00px;color:#136f9c;letter-spacing:-0.125px;">Clear all filters</div>
<div style="position:absolute;left:327.30px;top:245.20px;width:13.50px;height:13.50px;border:2px solid #2b2b2b;border-radius:2px"></div>
<div class="t" style="left:354.90px;top:248.00px;font-size:16.00px;color:#222;letter-spacing:-0.137px;">Show document history</div>
<div class="t" style="left:325.70px;top:284.00px;font-size:16.00px;color:#5a5a5a;letter-spacing:-0.173px;">Date Type</div>
<div class="t" style="left:715.00px;top:284.00px;font-size:16.00px;color:#5a5a5a;letter-spacing:-0.204px;">Date Range</div>
<div style="position:absolute;left:325.00px;top:308.00px;width:354.00px;height:34.00px;border:1px solid #7d7d7d;border-radius:4px;background:#fff"></div>
<div class="t" style="left:335.50px;top:318.00px;font-size:16.00px;color:#9a9a9a;letter-spacing:-0.096px;">Select a value</div>
<svg style="position:absolute;left:653px;top:322.7px" width="10" height="5.6" viewBox="0 0 10 5.6"><polygon points="0,0 10,0 5,5.6" fill="#555"/></svg>
<div style="position:absolute;left:714.00px;top:308.00px;width:354.00px;height:34.00px;border:1px solid #cfcfcf;border-radius:4px;background:#fff"></div>
<div class="t" style="left:724.50px;top:318.00px;font-size:16.00px;color:#d2d2d2;letter-spacing:-0.096px;">Select a value</div>
<svg style="position:absolute;left:1042px;top:322.7px" width="10" height="5.6" viewBox="0 0 10 5.6"><polygon points="0,0 10,0 5,5.6" fill="#c4c4c4"/></svg>
<svg style="position:absolute;left:1104px;top:319px" width="16" height="16" viewBox="0 0 16 16"><path d="M8 0V16M0 8H16" stroke="#161513" stroke-width="1.8"/></svg>
<div class="t" style="left:1126.00px;top:319.00px;font-size:16.00px;color:#161513;letter-spacing:-0.109px;">Add another date query</div>
<svg style="position:absolute;left:333px;top:366.5px" width="9" height="13" viewBox="0 0 9 13"><path d="M1.5 1L7.5 6.5L1.5 12" fill="none" stroke="#555" stroke-width="1.8"/></svg>
<div class="t" style="left:349.60px;top:366.00px;font-size:14.00px;color:#161513;letter-spacing:-0.298px;">MORE FILTERS (10)</div>
<svg style="position:absolute;left:1712px;top:360px" width="28" height="26" viewBox="0 0 28 26"><path d="M16.8 8.9A5.8 5.8 0 1 1 10.6 9.2" fill="none" stroke="#161513" stroke-width="1.6"/><polygon points="8.2,6.9 12.4,6.9 12.2,11.4" fill="#161513"/><path d="M13.7 7V14.6" stroke="#161513" stroke-width="1.6"/></svg>
<div class="t" style="left:1739.00px;top:366.00px;font-size:16.00px;color:#161513;letter-spacing:-0.137px;">Reset pinned filters</div>
<div style="position:absolute;left:294.00px;top:419.00px;width:1606.00px;height:1.00px;background:#cfcfcf"></div>
<div style="position:absolute;left:297.00px;top:439.50px;width:194.00px;height:28.00px;border:1px solid #7b7b7b;border-radius:4px;background:#fff"></div>
<div class="t" style="left:311.80px;top:447.00px;font-size:16.00px;color:#161513;letter-spacing:-0.133px;">Add/Update Documents</div>
<div style="position:absolute;left:492.00px;top:439.50px;width:31.00px;height:28.00px;border:1px solid #7b7b7b;border-radius:4px;background:#fff"></div>
<svg style="position:absolute;left:501.7px;top:451.5px" width="13.6" height="8" viewBox="0 0 13.6 8"><path d="M1 1L6.8 6.8L12.6 1" fill="none" stroke="#161513" stroke-width="2.2"/></svg>
<div style="position:absolute;left:528.00px;top:439.50px;width:103.00px;height:28.00px;border:1px solid #7b7b7b;border-radius:4px;background:#fff"></div>
<div class="t" style="left:543.20px;top:447.00px;font-size:16.00px;color:#161513;letter-spacing:-0.068px;">Transmit</div>
<svg style="position:absolute;left:609.7px;top:452px" width="13.6" height="8" viewBox="0 0 13.6 8"><path d="M1 1L6.8 6.8L12.6 1" fill="none" stroke="#161513" stroke-width="2.2"/></svg>
<div style="position:absolute;left:640.00px;top:439.50px;width:82.00px;height:28.00px;border:1px solid #7b7b7b;border-radius:4px;background:#fff"></div>
<div class="t" style="left:656.60px;top:447.00px;font-size:16.00px;color:#161513;letter-spacing:-0.273px;">Tools</div>
<svg style="position:absolute;left:700.5px;top:452px" width="13.6" height="8" viewBox="0 0 13.6 8"><path d="M1 1L6.8 6.8L12.6 1" fill="none" stroke="#161513" stroke-width="2.2"/></svg>
<div style="position:absolute;left:731.00px;top:439.50px;width:98.00px;height:28.00px;border:1px solid #7b7b7b;border-radius:4px;background:#fff"></div>
<div class="t" style="left:746.50px;top:447.00px;font-size:16.00px;color:#161513;letter-spacing:-0.177px;">Reports</div>
<svg style="position:absolute;left:807.4px;top:452px" width="13.6" height="8" viewBox="0 0 13.6 8"><path d="M1 1L6.8 6.8L12.6 1" fill="none" stroke="#161513" stroke-width="2.2"/></svg>
<div style="position:absolute;left:1711.00px;top:439.50px;width:185.00px;height:28.00px;border:1px solid #7b7b7b;border-radius:4px;background:#fff"></div>
<div class="t" style="left:1726.00px;top:447.00px;font-size:16.00px;color:#161513;letter-spacing:-0.148px;">Add/Remove Columns</div>
<div class="t" style="left:324.5px;top:500.00px;font-size:16px;color:#333;letter-spacing:-0.06px;">876 results (<b>0</b> selected)</div>
<div class="t" style="left:510.20px;top:500.00px;font-size:16.00px;color:#136f9c;letter-spacing:-0.073px;">Select All</div>
<div style="position:absolute;left:294.00px;top:528.00px;width:1607.00px;height:1.00px;background:#c3c7cb"></div>
<div style="position:absolute;left:294.00px;top:529.00px;width:1606.00px;height:35.00px;background:#f3f5f5"></div>
<div style="position:absolute;left:294.00px;top:564.00px;width:1606.00px;height:1.00px;background:#c3c7cb"></div>
<div style="position:absolute;left:1900.00px;top:528.00px;width:1.00px;height:552.00px;background:#c3c7cb"></div>
<div style="position:absolute;left:405.00px;top:538.00px;width:1.00px;height:17.50px;background:#d3d6d9"></div>
<div style="position:absolute;left:484.00px;top:538.00px;width:1.00px;height:17.50px;background:#d3d6d9"></div>
<div style="position:absolute;left:1046.00px;top:538.00px;width:1.00px;height:17.50px;background:#d3d6d9"></div>
<div style="position:absolute;left:1181.00px;top:538.00px;width:1.00px;height:17.50px;background:#d3d6d9"></div>
<div style="position:absolute;left:1365.00px;top:538.00px;width:1.00px;height:17.50px;background:#d3d6d9"></div>
<div style="position:absolute;left:1545.00px;top:538.00px;width:1.00px;height:17.50px;background:#d3d6d9"></div>
<div style="position:absolute;left:1725.00px;top:538.00px;width:1.00px;height:17.50px;background:#d3d6d9"></div>
<div style="position:absolute;left:709.00px;top:529.00px;width:1.00px;height:551.00px;background:#cfd2d5"></div>
<div style="position:absolute;left:307.30px;top:537.30px;width:17.50px;height:17.50px;border:1.5px solid #6b7277;border-radius:3px;background:#fff;box-sizing:border-box"></div>
<div class="t" style="left:420.20px;top:540.00px;font-size:14.00px;color:#363636;font-weight:700;letter-spacing:-0.559px;">File</div>
<div class="t" style="left:498.70px;top:540.00px;font-size:14.00px;color:#363636;font-weight:700;letter-spacing:-0.256px;">Document No</div>
<svg style="position:absolute;left:681px;top:538px" width="14" height="18" viewBox="0 0 14 18"><path d="M7 17.6V1.2M0.9 7.3L7 1.2L13.1 7.3" fill="none" stroke="#6a6a6a" stroke-width="1.9"/></svg>
<div class="t" style="left:724.00px;top:540.00px;font-size:14.00px;color:#363636;font-weight:700;letter-spacing:-0.097px;">Title</div>
<div class="t" style="left:1061.10px;top:540.00px;font-size:14.00px;color:#363636;font-weight:700;letter-spacing:-0.659px;">Revision</div>
<div class="t" style="left:1196.20px;top:540.00px;font-size:14.00px;color:#363636;font-weight:700;letter-spacing:-0.490px;">Version</div>
<div class="t" style="left:1379.90px;top:540.00px;font-size:14.00px;color:#363636;font-weight:700;letter-spacing:-0.730px;">Status</div>
<div class="t" style="left:1559.60px;top:540.00px;font-size:14.00px;color:#363636;font-weight:700;letter-spacing:-0.432px;">Discipline</div>
<div class="t" style="left:1739.40px;top:540.00px;font-size:14.00px;color:#363636;font-weight:700;letter-spacing:-0.498px;">Created By</div>
<div style="position:absolute;left:294.00px;top:565.50px;width:1606.00px;height:31.50px;background:#ffffff"></div>
<div style="position:absolute;left:294.00px;top:597.00px;width:1606.00px;height:31.50px;background:#fafbfd"></div>
<div style="position:absolute;left:294.00px;top:628.50px;width:1606.00px;height:31.50px;background:#ffffff"></div>
<div style="position:absolute;left:294.00px;top:660.00px;width:1606.00px;height:31.50px;background:#fafbfd"></div>
<div style="position:absolute;left:294.00px;top:691.50px;width:1606.00px;height:31.50px;background:#ffffff"></div>
<div style="position:absolute;left:294.00px;top:723.00px;width:1606.00px;height:31.50px;background:#fafbfd"></div>
<div style="position:absolute;left:294.00px;top:754.50px;width:1606.00px;height:31.50px;background:#ffffff"></div>
<div style="position:absolute;left:294.00px;top:786.00px;width:1606.00px;height:31.50px;background:#fafbfd"></div>
<div style="position:absolute;left:294.00px;top:817.50px;width:1606.00px;height:31.50px;background:#ffffff"></div>
<div style="position:absolute;left:294.00px;top:849.00px;width:1606.00px;height:31.50px;background:#fafbfd"></div>
<div style="position:absolute;left:294.00px;top:880.50px;width:1606.00px;height:31.50px;background:#ffffff"></div>
<div style="position:absolute;left:294.00px;top:912.00px;width:1606.00px;height:31.50px;background:#fafbfd"></div>
<div style="position:absolute;left:294.00px;top:943.50px;width:1606.00px;height:31.50px;background:#ffffff"></div>
<div style="position:absolute;left:294.00px;top:975.00px;width:1606.00px;height:31.50px;background:#fafbfd"></div>
<div style="position:absolute;left:294.00px;top:1006.50px;width:1606.00px;height:31.50px;background:#ffffff"></div>
<div style="position:absolute;left:294.00px;top:1038.00px;width:1606.00px;height:31.50px;background:#fafbfd"></div>
<div style="position:absolute;left:294.00px;top:1069.50px;width:1606.00px;height:31.50px;background:#ffffff"></div>
<div style="position:absolute;left:294.00px;top:596.00px;width:1606.00px;height:2.00px;background:#e9ebee"></div>
<div style="position:absolute;left:294.00px;top:628.00px;width:1606.00px;height:1.00px;background:#dcdfe2"></div>
<div style="position:absolute;left:294.00px;top:659.00px;width:1606.00px;height:2.00px;background:#e9ebee"></div>
<div style="position:absolute;left:294.00px;top:691.00px;width:1606.00px;height:1.00px;background:#dcdfe2"></div>
<div style="position:absolute;left:294.00px;top:722.00px;width:1606.00px;height:2.00px;background:#e9ebee"></div>
<div style="position:absolute;left:294.00px;top:754.00px;width:1606.00px;height:1.00px;background:#dcdfe2"></div>
<div style="position:absolute;left:294.00px;top:785.00px;width:1606.00px;height:2.00px;background:#e9ebee"></div>
<div style="position:absolute;left:294.00px;top:817.00px;width:1606.00px;height:1.00px;background:#dcdfe2"></div>
<div style="position:absolute;left:294.00px;top:848.00px;width:1606.00px;height:2.00px;background:#e9ebee"></div>
<div style="position:absolute;left:294.00px;top:880.00px;width:1606.00px;height:1.00px;background:#dcdfe2"></div>
<div style="position:absolute;left:294.00px;top:911.00px;width:1606.00px;height:2.00px;background:#e9ebee"></div>
<div style="position:absolute;left:294.00px;top:943.00px;width:1606.00px;height:1.00px;background:#dcdfe2"></div>
<div style="position:absolute;left:294.00px;top:974.00px;width:1606.00px;height:2.00px;background:#e9ebee"></div>
<div style="position:absolute;left:294.00px;top:1006.00px;width:1606.00px;height:1.00px;background:#dcdfe2"></div>
<div style="position:absolute;left:294.00px;top:1037.00px;width:1606.00px;height:2.00px;background:#e9ebee"></div>
<div style="position:absolute;left:294.00px;top:1069.00px;width:1606.00px;height:1.00px;background:#dcdfe2"></div>
<div style="position:absolute;left:294.00px;top:1100.00px;width:1606.00px;height:2.00px;background:#e9ebee"></div>
<div style="position:absolute;left:307.30px;top:574.40px;width:17.50px;height:17.50px;border:1.5px solid #6b7277;border-radius:3px;background:#fff;box-sizing:border-box"></div>
<svg style="position:absolute;left:419px;top:571px" width="23" height="23" viewBox="0 0 23 23"><rect width="23" height="23" fill="#fbb927"/><rect x="6.8" y="0" width="1.2" height="23" fill="#fff8e6"/><rect x="0" y="14.6" width="23" height="1.2" fill="#fff8e6"/><rect x="5.6" y="13.4" width="3.6" height="3.6" fill="#fff8e6"/></svg>
<div class="t" style="left:498.70px;top:574.00px;font-size:15.30px;color:#161513;">3D Single-Family Villa</div>
<div class="t" style="left:724.00px;top:574.00px;font-size:15.30px;color:#136f9c;">3D Single-Family Villa</div>
<div class="t" style="left:1061.10px;top:574.00px;font-size:15.30px;color:#161513;">A2</div>
<div class="t" style="left:1196.20px;top:574.00px;font-size:15.30px;color:#161513;">2</div>
<div class="t" style="left:1379.90px;top:574.00px;font-size:15.30px;color:#161513;">For Review</div>
<div class="t" style="left:1559.60px;top:574.00px;font-size:15.30px;color:#161513;">Civil</div>
<div class="t" style="left:1739.40px;top:574.00px;font-size:15.30px;color:#161513;">Alexander Jing</div>
<div style="position:absolute;left:307.30px;top:605.90px;width:17.50px;height:17.50px;border:1.5px solid #6b7277;border-radius:3px;background:#fff;box-sizing:border-box"></div>
<svg style="position:absolute;left:419px;top:602.5px" width="23" height="22" viewBox="0 0 23 22"><rect width="23" height="22" fill="#d0021b"/><path d="M10.6 3.2C8.8 3.6 9.6 8 11.4 11.2C12.6 13.4 14.4 15.2 16.6 14.8C18.2 14.4 18 12.4 15.6 12C12.8 11.6 9.2 13.2 7.2 15.6C5.6 17.6 6.6 19.4 8.4 18.6C10.6 17.6 12.4 12.2 12.2 7.6C12.1 4.6 11.6 3 10.6 3.2Z" fill="none" stroke="#fff" stroke-width="1.6"/></svg>
<div class="t" style="left:498.70px;top:606.00px;font-size:15.30px;color:#161513;">A-1000</div>
<div class="t" style="left:724.00px;top:606.00px;font-size:15.30px;color:#136f9c;">Notes &amp; Abbreviations</div>
<div class="t" style="left:1061.10px;top:606.00px;font-size:15.30px;color:#161513;">AB</div>
<div class="t" style="left:1196.20px;top:606.00px;font-size:15.30px;color:#161513;">31</div>
<div class="t" style="left:1379.90px;top:606.00px;font-size:15.30px;color:#161513;">Approved</div>
<div class="t" style="left:1559.60px;top:606.00px;font-size:15.30px;color:#161513;">Architectural</div>
<div class="t" style="left:1739.40px;top:606.00px;font-size:15.30px;color:#161513;">Splice</div>
<div style="position:absolute;left:307.30px;top:637.40px;width:17.50px;height:17.50px;border:1.5px solid #6b7277;border-radius:3px;background:#fff;box-sizing:border-box"></div>
<svg style="position:absolute;left:419px;top:634px" width="23" height="22" viewBox="0 0 23 22"><rect width="23" height="22" fill="#d0021b"/><path d="M10.6 3.2C8.8 3.6 9.6 8 11.4 11.2C12.6 13.4 14.4 15.2 16.6 14.8C18.2 14.4 18 12.4 15.6 12C12.8 11.6 9.2 13.2 7.2 15.6C5.6 17.6 6.6 19.4 8.4 18.6C10.6 17.6 12.4 12.2 12.2 7.6C12.1 4.6 11.6 3 10.6 3.2Z" fill="none" stroke="#fff" stroke-width="1.6"/></svg>
<svg style="position:absolute;left:444px;top:634px" width="28" height="28" viewBox="0 0 28 28"><path d="M4.2 23.4V20.4L19.4 5.3L23 8.9L7.9 23.4Z M14.6 10.1L18.2 13.7" fill="none" stroke="#5c5c5c" stroke-width="1.4" stroke-linejoin="miter"/><path d="M13 23.2H22.6" stroke="#5c5c5c" stroke-width="1.4"/></svg>
<div class="t" style="left:498.70px;top:637.00px;font-size:15.30px;color:#161513;">A-1001</div>
<div class="t" style="left:724.00px;top:637.00px;font-size:15.30px;color:#136f9c;">Site Plan</div>
<div class="t" style="left:1061.10px;top:637.00px;font-size:15.30px;color:#161513;">AB</div>
<div class="t" style="left:1196.20px;top:637.00px;font-size:15.30px;color:#161513;">46</div>
<div class="t" style="left:1379.90px;top:637.00px;font-size:15.30px;color:#161513;">Approved</div>
<div class="t" style="left:1559.60px;top:637.00px;font-size:15.30px;color:#161513;">Architectural</div>
<div class="t" style="left:1739.40px;top:637.00px;font-size:15.30px;color:#161513;">Splice</div>
<div style="position:absolute;left:307.30px;top:668.90px;width:17.50px;height:17.50px;border:1.5px solid #6b7277;border-radius:3px;background:#fff;box-sizing:border-box"></div>
<svg style="position:absolute;left:419px;top:665.5px" width="23" height="23" viewBox="0 0 23 23"><rect width="23" height="23" fill="#fbb927"/><rect x="6.8" y="0" width="1.2" height="23" fill="#fff8e6"/><rect x="0" y="14.6" width="23" height="1.2" fill="#fff8e6"/><rect x="5.6" y="13.4" width="3.6" height="3.6" fill="#fff8e6"/></svg>
<div class="t" style="left:498.70px;top:669.00px;font-size:15.30px;color:#161513;">A-1001-DWG</div>
<div class="t" style="left:724.00px;top:669.00px;font-size:15.30px;color:#136f9c;">Site Plan</div>
<div class="t" style="left:1061.10px;top:669.00px;font-size:15.30px;color:#161513;">D</div>
<div class="t" style="left:1196.20px;top:669.00px;font-size:15.30px;color:#161513;">3</div>
<div class="t" style="left:1379.90px;top:669.00px;font-size:15.30px;color:#161513;">For Review</div>
<div class="t" style="left:1559.60px;top:669.00px;font-size:15.30px;color:#161513;">Architectural</div>
<div class="t" style="left:1739.40px;top:669.00px;font-size:15.30px;color:#161513;">Splice Architecture</div>
<div style="position:absolute;left:307.30px;top:700.40px;width:17.50px;height:17.50px;border:1.5px solid #6b7277;border-radius:3px;background:#fff;box-sizing:border-box"></div>
<svg style="position:absolute;left:419px;top:697px" width="23" height="22" viewBox="0 0 23 22"><rect width="23" height="22" fill="#d0021b"/><path d="M10.6 3.2C8.8 3.6 9.6 8 11.4 11.2C12.6 13.4 14.4 15.2 16.6 14.8C18.2 14.4 18 12.4 15.6 12C12.8 11.6 9.2 13.2 7.2 15.6C5.6 17.6 6.6 19.4 8.4 18.6C10.6 17.6 12.4 12.2 12.2 7.6C12.1 4.6 11.6 3 10.6 3.2Z" fill="none" stroke="#fff" stroke-width="1.6"/></svg>
<div class="t" style="left:498.70px;top:700.00px;font-size:15.30px;color:#161513;">A-1002</div>
<div class="t" style="left:724.00px;top:700.00px;font-size:15.30px;color:#136f9c;">Staging Plan</div>
<div class="t" style="left:1061.10px;top:700.00px;font-size:15.30px;color:#161513;">C</div>
<div class="t" style="left:1196.20px;top:700.00px;font-size:15.30px;color:#161513;">28</div>
<div class="t" style="left:1379.90px;top:700.00px;font-size:15.30px;color:#161513;">For Review</div>
<div class="t" style="left:1559.60px;top:700.00px;font-size:15.30px;color:#161513;">Architectural</div>
<div class="t" style="left:1739.40px;top:700.00px;font-size:15.30px;color:#161513;">Splice</div>
<div style="position:absolute;left:307.30px;top:731.90px;width:17.50px;height:17.50px;border:1.5px solid #6b7277;border-radius:3px;background:#fff;box-sizing:border-box"></div>
<svg style="position:absolute;left:419px;top:728.5px" width="23" height="23" viewBox="0 0 23 23"><rect width="23" height="23" fill="#fbb927"/><rect x="6.8" y="0" width="1.2" height="23" fill="#fff8e6"/><rect x="0" y="14.6" width="23" height="1.2" fill="#fff8e6"/><rect x="5.6" y="13.4" width="3.6" height="3.6" fill="#fff8e6"/></svg>
<div class="t" style="left:498.70px;top:732.00px;font-size:15.30px;color:#161513;">A-1002-DWG</div>
<div class="t" style="left:724.00px;top:732.00px;font-size:15.30px;color:#136f9c;">Staging Plan</div>
<div class="t" style="left:1061.10px;top:732.00px;font-size:15.30px;color:#161513;">C</div>
<div class="t" style="left:1196.20px;top:732.00px;font-size:15.30px;color:#161513;">2</div>
<div class="t" style="left:1379.90px;top:732.00px;font-size:15.30px;color:#161513;">Approved</div>
<div class="t" style="left:1559.60px;top:732.00px;font-size:15.30px;color:#161513;">Architectural</div>
<div class="t" style="left:1739.40px;top:732.00px;font-size:15.30px;color:#161513;">Splice Architecture</div>
<div style="position:absolute;left:307.30px;top:763.40px;width:17.50px;height:17.50px;border:1.5px solid #6b7277;border-radius:3px;background:#fff;box-sizing:border-box"></div>
<svg style="position:absolute;left:419px;top:760px" width="23" height="22" viewBox="0 0 23 22"><rect width="23" height="22" fill="#d0021b"/><path d="M10.6 3.2C8.8 3.6 9.6 8 11.4 11.2C12.6 13.4 14.4 15.2 16.6 14.8C18.2 14.4 18 12.4 15.6 12C12.8 11.6 9.2 13.2 7.2 15.6C5.6 17.6 6.6 19.4 8.4 18.6C10.6 17.6 12.4 12.2 12.2 7.6C12.1 4.6 11.6 3 10.6 3.2Z" fill="none" stroke="#fff" stroke-width="1.6"/></svg>
<div class="t" style="left:498.70px;top:763.00px;font-size:15.30px;color:#161513;">A-1003</div>
<div class="t" style="left:724.00px;top:763.00px;font-size:15.30px;color:#136f9c;">Foundation Plan</div>
<div class="t" style="left:1061.10px;top:763.00px;font-size:15.30px;color:#161513;">E</div>
<div class="t" style="left:1196.20px;top:763.00px;font-size:15.30px;color:#161513;">27</div>
<div class="t" style="left:1379.90px;top:763.00px;font-size:15.30px;color:#161513;">Approved</div>
<div class="t" style="left:1559.60px;top:763.00px;font-size:15.30px;color:#161513;">Architectural</div>
<div class="t" style="left:1739.40px;top:763.00px;font-size:15.30px;color:#161513;">Splice</div>
<div style="position:absolute;left:307.30px;top:794.90px;width:17.50px;height:17.50px;border:1.5px solid #6b7277;border-radius:3px;background:#fff;box-sizing:border-box"></div>
<svg style="position:absolute;left:419px;top:791.5px" width="23" height="23" viewBox="0 0 23 23"><rect width="23" height="23" fill="#fbb927"/><rect x="6.8" y="0" width="1.2" height="23" fill="#fff8e6"/><rect x="0" y="14.6" width="23" height="1.2" fill="#fff8e6"/><rect x="5.6" y="13.4" width="3.6" height="3.6" fill="#fff8e6"/></svg>
<div class="t" style="left:498.70px;top:795.00px;font-size:15.30px;color:#161513;">A-1003-DWG</div>
<div class="t" style="left:724.00px;top:795.00px;font-size:15.30px;color:#136f9c;">Foundation Plan</div>
<div class="t" style="left:1061.10px;top:795.00px;font-size:15.30px;color:#161513;">E</div>
<div class="t" style="left:1196.20px;top:795.00px;font-size:15.30px;color:#161513;">5</div>
<div class="t" style="left:1379.90px;top:795.00px;font-size:15.30px;color:#161513;">Approved</div>
<div class="t" style="left:1559.60px;top:795.00px;font-size:15.30px;color:#161513;">Architectural</div>
<div class="t" style="left:1739.40px;top:795.00px;font-size:15.30px;color:#161513;">Splice</div>
<div style="position:absolute;left:307.30px;top:826.40px;width:17.50px;height:17.50px;border:1.5px solid #6b7277;border-radius:3px;background:#fff;box-sizing:border-box"></div>
<svg style="position:absolute;left:419px;top:823px" width="23" height="22" viewBox="0 0 23 22"><rect width="23" height="22" fill="#d0021b"/><path d="M10.6 3.2C8.8 3.6 9.6 8 11.4 11.2C12.6 13.4 14.4 15.2 16.6 14.8C18.2 14.4 18 12.4 15.6 12C12.8 11.6 9.2 13.2 7.2 15.6C5.6 17.6 6.6 19.4 8.4 18.6C10.6 17.6 12.4 12.2 12.2 7.6C12.1 4.6 11.6 3 10.6 3.2Z" fill="none" stroke="#fff" stroke-width="1.6"/></svg>
<svg style="position:absolute;left:444px;top:823px" width="28" height="28" viewBox="0 0 28 28"><path d="M4.2 23.4V20.4L19.4 5.3L23 8.9L7.9 23.4Z M14.6 10.1L18.2 13.7" fill="none" stroke="#5c5c5c" stroke-width="1.4" stroke-linejoin="miter"/><path d="M13 23.2H22.6" stroke="#5c5c5c" stroke-width="1.4"/></svg>
<div class="t" style="left:498.70px;top:826.00px;font-size:15.30px;color:#161513;">A-1004</div>
<div class="t" style="left:724.00px;top:826.00px;font-size:15.30px;color:#136f9c;">Foundation Plan</div>
<div class="t" style="left:1061.10px;top:826.00px;font-size:15.30px;color:#161513;">F</div>
<div class="t" style="left:1196.20px;top:826.00px;font-size:15.30px;color:#161513;">30</div>
<div class="t" style="left:1379.90px;top:826.00px;font-size:15.30px;color:#161513;">Approved</div>
<div class="t" style="left:1559.60px;top:826.00px;font-size:15.30px;color:#161513;">Architectural</div>
<div class="t" style="left:1739.40px;top:826.00px;font-size:15.30px;color:#161513;">Splice</div>
<div style="position:absolute;left:307.30px;top:857.90px;width:17.50px;height:17.50px;border:1.5px solid #6b7277;border-radius:3px;background:#fff;box-sizing:border-box"></div>
<svg style="position:absolute;left:419px;top:854.5px" width="23" height="23" viewBox="0 0 23 23"><rect width="23" height="23" fill="#fbb927"/><rect x="6.8" y="0" width="1.2" height="23" fill="#fff8e6"/><rect x="0" y="14.6" width="23" height="1.2" fill="#fff8e6"/><rect x="5.6" y="13.4" width="3.6" height="3.6" fill="#fff8e6"/></svg>
<div class="t" style="left:498.70px;top:858.00px;font-size:15.30px;color:#161513;">A-1004-DWG</div>
<div class="t" style="left:724.00px;top:858.00px;font-size:15.30px;color:#136f9c;">Foundation Plan</div>
<div class="t" style="left:1061.10px;top:858.00px;font-size:15.30px;color:#161513;">F</div>
<div class="t" style="left:1196.20px;top:858.00px;font-size:15.30px;color:#161513;">7</div>
<div class="t" style="left:1379.90px;top:858.00px;font-size:15.30px;color:#161513;">Approved</div>
<div class="t" style="left:1559.60px;top:858.00px;font-size:15.30px;color:#161513;">Architectural</div>
<div class="t" style="left:1739.40px;top:858.00px;font-size:15.30px;color:#161513;">Splice</div>
<div style="position:absolute;left:307.30px;top:889.40px;width:17.50px;height:17.50px;border:1.5px solid #6b7277;border-radius:3px;background:#fff;box-sizing:border-box"></div>
<svg style="position:absolute;left:419px;top:886px" width="23" height="22" viewBox="0 0 23 22"><rect width="23" height="22" fill="#d0021b"/><path d="M10.6 3.2C8.8 3.6 9.6 8 11.4 11.2C12.6 13.4 14.4 15.2 16.6 14.8C18.2 14.4 18 12.4 15.6 12C12.8 11.6 9.2 13.2 7.2 15.6C5.6 17.6 6.6 19.4 8.4 18.6C10.6 17.6 12.4 12.2 12.2 7.6C12.1 4.6 11.6 3 10.6 3.2Z" fill="none" stroke="#fff" stroke-width="1.6"/></svg>
<div class="t" style="left:498.70px;top:889.00px;font-size:15.30px;color:#161513;">A-1005</div>
<div class="t" style="left:724.00px;top:889.00px;font-size:15.30px;color:#136f9c;">Foundation Plan</div>
<div class="t" style="left:1061.10px;top:889.00px;font-size:15.30px;color:#161513;">D</div>
<div class="t" style="left:1196.20px;top:889.00px;font-size:15.30px;color:#161513;">5</div>
<div class="t" style="left:1379.90px;top:889.00px;font-size:15.30px;color:#161513;">For Review</div>
<div class="t" style="left:1559.60px;top:889.00px;font-size:15.30px;color:#161513;">Architectural</div>
<div class="t" style="left:1739.40px;top:889.00px;font-size:15.30px;color:#161513;">Splice Architecture</div>
<div style="position:absolute;left:307.30px;top:920.90px;width:17.50px;height:17.50px;border:1.5px solid #6b7277;border-radius:3px;background:#fff;box-sizing:border-box"></div>
<svg style="position:absolute;left:419px;top:917.5px" width="23" height="22" viewBox="0 0 23 22"><rect width="23" height="22" fill="#8d918f"/><g fill="#e6e6e6"><rect x="9" y="2" width="3" height="2.4"/><rect x="12" y="4.4" width="3" height="2.4"/><rect x="9" y="6.8" width="3" height="2.4"/><rect x="12" y="9.2" width="3" height="2.4"/><rect x="9" y="11.6" width="3" height="2.4"/><rect x="12" y="14" width="3" height="2.4"/><rect x="9" y="16.4" width="3" height="2.4"/></g></svg>
<div class="t" style="left:498.70px;top:921.00px;font-size:15.30px;color:#161513;">A-1006</div>
<div class="t" style="left:724.00px;top:921.00px;font-size:15.30px;color:#136f9c;">Foundation Plan</div>
<div class="t" style="left:1061.10px;top:921.00px;font-size:15.30px;color:#161513;">C</div>
<div class="t" style="left:1196.20px;top:921.00px;font-size:15.30px;color:#161513;">7</div>
<div class="t" style="left:1379.90px;top:921.00px;font-size:15.30px;color:#161513;">For Review</div>
<div class="t" style="left:1559.60px;top:921.00px;font-size:15.30px;color:#161513;">Architectural</div>
<div class="t" style="left:1739.40px;top:921.00px;font-size:15.30px;color:#161513;">Splice Architecture</div>
<div style="position:absolute;left:307.30px;top:952.40px;width:17.50px;height:17.50px;border:1.5px solid #6b7277;border-radius:3px;background:#fff;box-sizing:border-box"></div>
<svg style="position:absolute;left:419px;top:949px" width="23" height="23" viewBox="0 0 23 23"><rect width="23" height="23" fill="#fbb927"/><rect x="6.8" y="0" width="1.2" height="23" fill="#fff8e6"/><rect x="0" y="14.6" width="23" height="1.2" fill="#fff8e6"/><rect x="5.6" y="13.4" width="3.6" height="3.6" fill="#fff8e6"/></svg>
<div class="t" style="left:498.70px;top:952.00px;font-size:15.30px;color:#161513;">A-1006-DWG</div>
<div class="t" style="left:724.00px;top:952.00px;font-size:15.30px;color:#136f9c;">Foundation Plan</div>
<div class="t" style="left:1061.10px;top:952.00px;font-size:15.30px;color:#161513;">C</div>
<div class="t" style="left:1196.20px;top:952.00px;font-size:15.30px;color:#161513;">2</div>
<div class="t" style="left:1379.90px;top:952.00px;font-size:15.30px;color:#161513;">For Review</div>
<div class="t" style="left:1559.60px;top:952.00px;font-size:15.30px;color:#161513;">Architectural</div>
<div class="t" style="left:1739.40px;top:952.00px;font-size:15.30px;color:#161513;">Splice Architecture</div>
<div style="position:absolute;left:307.30px;top:983.90px;width:17.50px;height:17.50px;border:1.5px solid #6b7277;border-radius:3px;background:#fff;box-sizing:border-box"></div>
<svg style="position:absolute;left:419px;top:980.5px" width="23" height="22" viewBox="0 0 23 22"><rect width="23" height="22" fill="#d0021b"/><path d="M10.6 3.2C8.8 3.6 9.6 8 11.4 11.2C12.6 13.4 14.4 15.2 16.6 14.8C18.2 14.4 18 12.4 15.6 12C12.8 11.6 9.2 13.2 7.2 15.6C5.6 17.6 6.6 19.4 8.4 18.6C10.6 17.6 12.4 12.2 12.2 7.6C12.1 4.6 11.6 3 10.6 3.2Z" fill="none" stroke="#fff" stroke-width="1.6"/></svg>
<div class="t" style="left:498.70px;top:984.00px;font-size:15.30px;color:#161513;">A-1007</div>
<div class="t" style="left:724.00px;top:984.00px;font-size:15.30px;color:#136f9c;">Foundation Plan</div>
<div class="t" style="left:1061.10px;top:984.00px;font-size:15.30px;color:#161513;">C</div>
<div class="t" style="left:1196.20px;top:984.00px;font-size:15.30px;color:#161513;">2</div>
<div class="t" style="left:1379.90px;top:984.00px;font-size:15.30px;color:#161513;">For Review</div>
<div class="t" style="left:1559.60px;top:984.00px;font-size:15.30px;color:#161513;">Architectural</div>
<div class="t" style="left:1739.40px;top:984.00px;font-size:15.30px;color:#161513;">Splice Architecture</div>
<div style="position:absolute;left:307.30px;top:1015.40px;width:17.50px;height:17.50px;border:1.5px solid #6b7277;border-radius:3px;background:#fff;box-sizing:border-box"></div>
<svg style="position:absolute;left:419px;top:1012px" width="23" height="23" viewBox="0 0 23 23"><rect width="23" height="23" fill="#fbb927"/><rect x="6.8" y="0" width="1.2" height="23" fill="#fff8e6"/><rect x="0" y="14.6" width="23" height="1.2" fill="#fff8e6"/><rect x="5.6" y="13.4" width="3.6" height="3.6" fill="#fff8e6"/></svg>
<div class="t" style="left:498.70px;top:1015.00px;font-size:15.30px;color:#161513;">A-1007-DWG</div>
<div class="t" style="left:724.00px;top:1015.00px;font-size:15.30px;color:#136f9c;">Foundation Plan</div>
<div class="t" style="left:1061.10px;top:1015.00px;font-size:15.30px;color:#161513;">C</div>
<div class="t" style="left:1196.20px;top:1015.00px;font-size:15.30px;color:#161513;">1</div>
<div class="t" style="left:1379.90px;top:1015.00px;font-size:15.30px;color:#161513;">Approved</div>
<div class="t" style="left:1559.60px;top:1015.00px;font-size:15.30px;color:#161513;">Architectural</div>
<div class="t" style="left:1739.40px;top:1015.00px;font-size:15.30px;color:#161513;">Splice Architecture</div>
<div style="position:absolute;left:307.30px;top:1046.90px;width:17.50px;height:17.50px;border:1.5px solid #6b7277;border-radius:3px;background:#fff;box-sizing:border-box"></div>
<svg style="position:absolute;left:419px;top:1043.5px" width="23" height="22" viewBox="0 0 23 22"><rect width="23" height="22" fill="#d0021b"/><path d="M10.6 3.2C8.8 3.6 9.6 8 11.4 11.2C12.6 13.4 14.4 15.2 16.6 14.8C18.2 14.4 18 12.4 15.6 12C12.8 11.6 9.2 13.2 7.2 15.6C5.6 17.6 6.6 19.4 8.4 18.6C10.6 17.6 12.4 12.2 12.2 7.6C12.1 4.6 11.6 3 10.6 3.2Z" fill="none" stroke="#fff" stroke-width="1.6"/></svg>
<div class="t" style="left:498.70px;top:1047.00px;font-size:15.30px;color:#161513;">A-1008</div>
<div class="t" style="left:724.00px;top:1047.00px;font-size:15.30px;color:#136f9c;">Foundation Details</div>
<div class="t" style="left:1061.10px;top:1047.00px;font-size:15.30px;color:#161513;">D</div>
<div class="t" style="left:1196.20px;top:1047.00px;font-size:15.30px;color:#161513;">2</div>
<div class="t" style="left:1379.90px;top:1047.00px;font-size:15.30px;color:#161513;">Approved</div>
<div class="t" style="left:1559.60px;top:1047.00px;font-size:15.30px;color:#161513;">Architectural</div>
<div class="t" style="left:1739.40px;top:1047.00px;font-size:15.30px;color:#161513;">Splice Architecture</div>
<div style="position:absolute;left:307.30px;top:1078.40px;width:17.50px;height:17.50px;border:1.5px solid #6b7277;border-radius:3px;background:#fff;box-sizing:border-box"></div>
<svg style="position:absolute;left:419px;top:1075px" width="23" height="23" viewBox="0 0 23 23"><rect width="23" height="23" fill="#fbb927"/><rect x="6.8" y="0" width="1.2" height="23" fill="#fff8e6"/><rect x="0" y="14.6" width="23" height="1.2" fill="#fff8e6"/><rect x="5.6" y="13.4" width="3.6" height="3.6" fill="#fff8e6"/></svg>
<div style="position:absolute;left:709.00px;top:565.00px;width:1.00px;height:515.00px;background:#d5d8db"></div>
<div style="position:absolute;left:1900.00px;top:528.00px;width:1.00px;height:552.00px;background:#c3c7cb"></div>
</body></html>
